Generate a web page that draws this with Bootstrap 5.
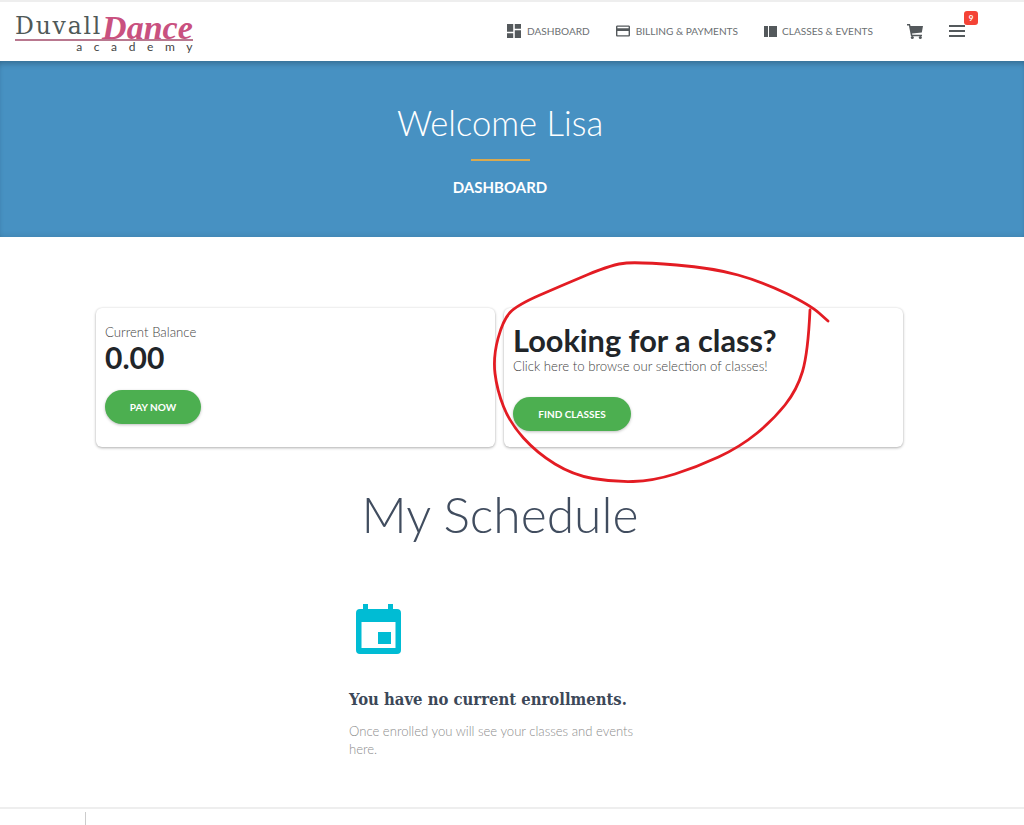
<!DOCTYPE html>
<html lang="en">
<head>
    <meta charset="UTF-8">
    <meta name="viewport" content="width=device-width, initial-scale=1.0">
    <title>Dashboard</title>
    <link rel="stylesheet" href="https://cdn.jsdelivr.net/npm/bootstrap@5.3.2/dist/css/bootstrap.min.css">
    <style>
        body {
            font-family: Lato, "Liberation Sans", sans-serif;
            background-color: #fff;
            height: 825px;
            overflow: hidden;
            position: relative;
        }

        .top-bar {
            height: 61px;
            border-top: 2px solid #eee;
            padding: 0 59px 0 15px;
        }

        .logo-box {
            width: 178px;
            line-height: 1;
            margin-top: 1px;
        }

        .logo-top {
            border-bottom: 2px solid #b9788f;
            height: 30px;
            white-space: nowrap;
        }

        .logo-duvall {
            font-family: "DejaVu Serif", serif;
            font-size: 23.5px;
            color: #4f5958;
            letter-spacing: 1.8px;
            vertical-align: 5px;
        }

        .logo-dance {
            font-family: "Liberation Serif", serif;
            font-style: italic;
            font-weight: 700;
            font-size: 34px;
            color: #c9517f;
        }

        .logo-academy {
            font-size: 12px;
            letter-spacing: 11.6px;
            color: #444;
            text-align: right;
            margin-right: -11px;
            white-space: nowrap;
        }

        .menu-link {
            font-size: 10.1px;
            color: #6b6f72;
            text-transform: uppercase;
            white-space: nowrap;
            gap: 6px;
        }

        .menu-icon {
            fill: #54595c;
        }

        .menu-badge {
            position: absolute;
            top: -14px;
            left: 15px;
            width: 14px;
            height: 14px;
            border-radius: 3px;
            background: #f44336;
            color: #fff;
            font-size: 8px;
            font-weight: 700;
            line-height: 14px;
            text-align: center;
        }

        .cart-link {
            margin-left: 34px;
            line-height: 0;
        }

        .burger-link {
            margin-left: 26px;
            line-height: 0;
        }

        .billing-link {
            margin-left: 26px;
        }

        .classes-link {
            margin-left: 26px;
            gap: 5px;
        }

        .hero {
            height: 176px;
            background: #4791c2;
            box-shadow: inset 0 5px 6px -3px rgba(0, 0, 0, .28), inset 0 -4px 6px -4px rgba(0, 0, 0, .12);
            padding-right: 24px;
            padding-top: 40px;
        }

        .hero-title {
            font-size: 34.6px;
            font-weight: 300;
            line-height: 43px;
            margin: 0;
        }

        .hero-rule {
            width: 59px;
            height: 2px;
            background: #d9a94f;
            margin: 15px auto 17px;
        }

        .hero-sub {
            font-size: 15px;
            font-weight: 700;
            line-height: 18px;
        }

        .balance-row {
            width: 807px;
            margin: 71px 0 0 96px;
            gap: 9px;
        }

        .info-card {
            height: 139px;
            flex: 1 1 0;
            padding: 16px 9px;
            border-radius: 6px;
            box-shadow: 0 1px 3px rgba(0, 0, 0, .3), 0 0 2px rgba(0, 0, 0, .08);
        }

        .card-label {
            font-size: 13.2px;
            font-weight: 300;
            line-height: 17px;
            color: #444;
        }

        .card-amount {
            font-size: 30px;
            font-weight: 700;
            line-height: 33px;
            color: #212529;
        }

        .card-title-big {
            font-size: 30.7px;
            font-weight: 700;
            line-height: 35px;
            color: #212529;
            margin-top: -1px;
        }

        .green-btn {
            display: block;
            height: 34px;
            border-radius: 17px;
            background: #4caf50;
            color: #fff;
            font-size: 10px;
            font-weight: 700;
            line-height: 34px;
            padding: 0;
            border: 0;
            box-shadow: 0 1px 3px rgba(0, 0, 0, .25);
        }

        .pay-btn {
            width: 96px;
            margin-top: 16px;
        }

        .find-btn {
            width: 118px;
            margin-top: 22px;
        }

        .schedule-title {
            font-size: 49.8px;
            font-weight: 300;
            line-height: 62px;
            color: #414d5f;
            text-align: center;
            padding-right: 24px;
            margin: 36px 0 0;
        }

        .empty-box {
            width: 300px;
            margin: 59px 0 0 349px;
        }

        .empty-icon {
            display: block;
            margin-left: 7px;
            fill: #00bcd4;
        }

        .empty-title {
            font-family: "DejaVu Serif Condensed", "DejaVu Serif", serif;
            font-stretch: condensed;
            font-size: 16.5px;
            font-weight: 700;
            line-height: 20px;
            color: #3c4858;
            margin: 36px 0 0;
            white-space: nowrap;
        }

        .empty-text {
            font-size: 13.1px;
            font-weight: 300;
            line-height: 18px;
            color: #8d8d8d;
            margin: 12px 0 0;
        }

        .page-foot {
            position: absolute;
            left: 0;
            right: 0;
            top: 807px;
            height: 18px;
            border-top: 2px solid #eee;
        }

        .foot-tick {
            width: 1px;
            height: 14px;
            margin: 3px 0 0 85px;
            background: #ccc;
        }

        .scribble {
            position: absolute;
            left: 0;
            top: 0;
            pointer-events: none;
        }
    </style>
</head>
<body>
    <nav class="top-bar d-flex align-items-center justify-content-between bg-white">
        <a href="#" class="logo-box text-decoration-none d-block">
            <div class="logo-top"><span class="logo-duvall">Duvall</span><span class="logo-dance">Dance</span></div>
            <div class="logo-academy">academy</div>
        </a>
        <div class="d-flex align-items-center">
            <a href="#" class="menu-link text-decoration-none d-flex align-items-center">
                <svg class="menu-icon" width="14" height="14" viewBox="3 3 18 18"><path d="M3 13h8V3H3v10zm0 8h8v-6H3v6zm10 0h8V11h-8v10zm0-18v6h8V3h-8z"/></svg>
                Dashboard
            </a>
            <a href="#" class="menu-link billing-link text-decoration-none d-flex align-items-center">
                <svg class="menu-icon" width="14" height="12" viewBox="2 4 20 16"><path d="M20 4H4c-1.110 0-1.990.89-1.990 2L2 18c0 1.110.89 2 2 2h16c1.110 0 2-.89 2-2V6c0-1.110-.89-2-2-2zm0 14H4v-6h16v6zm0-10H4V6h16v2z"/></svg>
                Billing &amp; Payments
            </a>
            <a href="#" class="menu-link classes-link text-decoration-none d-flex align-items-center">
                <svg class="menu-icon" width="13" height="11" viewBox="0 0 13 11"><path d="M0 0h4v11H0zM5 0h8v11H5z"/></svg>
                Classes &amp; Events
            </a>
            <a href="#" class="cart-link d-block">
                <svg class="menu-icon" width="16" height="15" viewBox="0 0 16 15"><path d="M0 0h3l.5 2H16l-1.200 6.500-9.800 1 .3 1.200h9.700V12.200H4L1.900 1.500H0z"/><circle cx="5.300" cy="13.500" r="1.500"/><circle cx="13.300" cy="13.500" r="1.500"/></svg>
            </a>
            <a href="#" class="burger-link d-block position-relative">
                <svg class="menu-icon" width="16" height="12" viewBox="0 0 16 12"><path d="M0 0h16v2H0zM0 5h16v2H0zM0 10h16v2H0z"/></svg>
                <span class="menu-badge">9</span>
            </a>
        </div>
    </nav>

    <header class="hero text-center text-white">
        <h1 class="hero-title">Welcome Lisa</h1>
        <div class="hero-rule"></div>
        <div class="hero-sub">DASHBOARD</div>
    </header>

    <div class="balance-row d-flex">
        <div class="card info-card border-0">
            <div class="card-label">Current Balance</div>
            <div class="card-amount">0.00</div>
            <button class="green-btn pay-btn">PAY NOW</button>
        </div>
        <div class="card info-card border-0">
            <div class="card-title-big">Looking for a class?</div>
            <div class="card-label">Click here to browse our selection of classes!</div>
            <button class="green-btn find-btn">FIND CLASSES</button>
        </div>
    </div>

    <h2 class="schedule-title">My Schedule</h2>

    <div class="empty-box">
        <svg class="empty-icon" width="45" height="50" viewBox="0 0 45 50"><path fill-rule="evenodd" d="M7 0h5v5h20V0h5v5h4a4 4 0 0 1 4 4v37a4 4 0 0 1-4 4H4a4 4 0 0 1-4-4V9a4 4 0 0 1 4-4h3zM5.500 18v26h34V18zM22 28h13v12H22z"/></svg>
        <h3 class="empty-title">You have no current enrollments.</h3>
        <p class="empty-text">Once enrolled you will see your classes and events here.</p>
    </div>

    <footer class="page-foot"><div class="foot-tick"></div></footer>

    <svg class="scribble" width="1024" height="825" viewBox="0 0 1024 825" fill="none" stroke="#e31c23" stroke-width="2.800" stroke-linecap="round">
        <path d="M828 321L819 313Q810 305 786.500 293.500Q763 282 738 275Q713 268 676.500 265Q640 262 626.500 263Q613 264 588 274.500Q563 285 540 295Q517 305 510 312.500Q503 320 498 338.500Q493 357 495 373.500Q497 390 503.500 406.500Q510 423 523.500 438Q537 453 555 464Q573 475 593 478.500Q613 482 633 481.500Q653 481 675 474Q697 467 718.500 457Q740 447 756.500 433.500Q773 420 785 405Q797 390 802.500 371.500Q808 353 810 310"/>
    </svg>

    <script src="https://cdn.jsdelivr.net/npm/bootstrap@5.3.2/dist/js/bootstrap.bundle.min.js"></script>
</body>
</html>
